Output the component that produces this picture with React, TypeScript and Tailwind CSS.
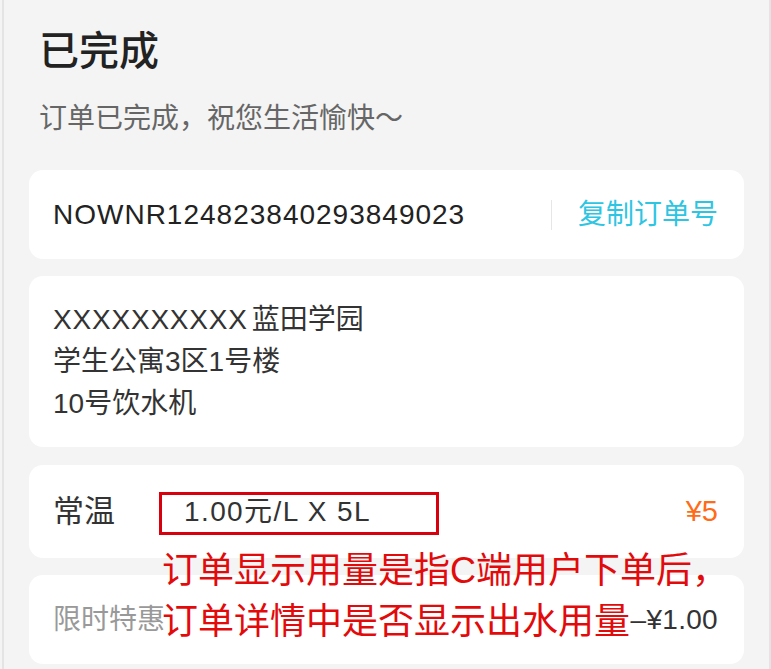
export default function App() {
  return (
    <div className="h-[669px] w-[771px] overflow-hidden bg-[#f4f4f4] font-['Liberation_Sans','Noto_Sans_CJK_SC',sans-serif]">
      <div className="ml-[2px] h-full border-x-2 border-[#e4e4e4] px-[25px]">
        {/* Header */}
        <div className="pl-[10px] pt-[31px]">
          <h1 className="text-[40px] leading-[40px] font-medium text-[#222]">已完成</h1>
          <p className="mt-[30px] text-[28px] leading-[36px] text-[#666]">订单已完成，祝您生活愉快～</p>
        </div>

        {/* Order number */}
        <div className="mt-[33px] flex h-[89px] items-center rounded-[14px] bg-white pl-[24px] pr-[26px]">
          <span className="text-[28px] leading-none tracking-[1px] text-[#222]">NOWNR124823840293849023</span>
          <span className="ml-auto mr-[26px] h-[30px] w-px bg-[#e6e6e6]" />
          <button className="text-[28px] leading-none text-[#2ec5e3]">复制订单号</button>
        </div>

        {/* Address */}
        <div className="mt-[17px] rounded-[14px] bg-white pb-[22px] pl-[24px] pr-[26px] pt-[23px] text-[28px] leading-[42px] text-[#333]">
          <p>
            <span className="mr-[4px] tracking-[0.8px]">XXXXXXXXXX</span>蓝田学园
          </p>
          <p>学生公寓3区1号楼</p>
          <p>10号饮水机</p>
        </div>

        {/* Item */}
        <div className="relative mt-[18px] flex h-[93px] items-center rounded-[14px] bg-white pl-[24px] pr-[26px] leading-none">
          <span className="w-[131px] text-[31px] text-[#333]">常温</span>
          <span className="text-[28px] tracking-[1.4px] text-[#333]">1.00元/L X 5L</span>
          <span className="ml-auto text-[29px] text-[#ff6b17]">{"\u00a55"}</span>

          {/* annotation overlay */}
          <div className="absolute left-[130px] top-[27px] h-[43px] w-[280px] border-[3px] border-[#d9000d]" />
          <div className="absolute left-[133px] top-[80px] z-10 text-[36px] leading-[51px] text-[#e20a0a]">
            <p>订单显示用量是指C端用户下单后，</p>
            <p>订单详情中是否显示出水用量</p>
          </div>
        </div>

        {/* Discount */}
        <div className="mt-[17px] flex h-[89px] items-center rounded-[14px] bg-white pl-[24px] pr-[26px] text-[28px] leading-none">
          <span className="text-[#999]">限时特惠</span>
          <span className="ml-auto tracking-[0.3px] text-[#333]">{"\u2013\u00a51.00"}</span>
        </div>
      </div>
    </div>
  );
}
